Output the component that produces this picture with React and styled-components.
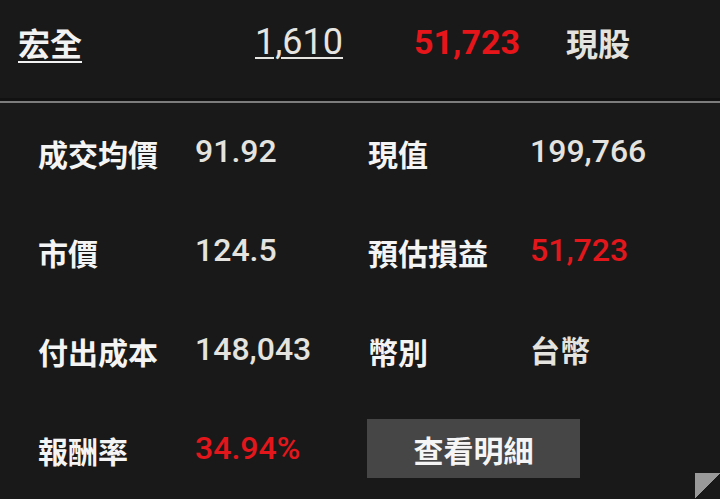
import React from "react";
import styled, { createGlobalStyle } from "styled-components";

const Global = createGlobalStyle`
  html, body { margin: 0; padding: 0; background: #191919; }
  body { width: 720px; height: 499px; overflow: hidden; }
`;

const CJK = `"Noto Sans CJK TC", "Noto Sans CJK SC", sans-serif`;
const NUM = `Roboto, "Noto Sans CJK TC", sans-serif`;

const Page = styled.div`
  position: relative;
  width: 720px;
  height: 499px;
  background: #191919;
  overflow: hidden;
`;

const Header = styled.div`
  display: flex;
  align-items: center;
  height: 84px;
  padding-bottom: 14px;
  border-bottom: 3px solid #111;
`;

const Divider = styled.div`
  height: 2px;
  background: #7c7c7c;
`;

const HCell = styled.div`
  width: ${(p) => p.$w}px;
  flex: none;
  padding-left: ${(p) => p.$pl || 0}px;
  box-sizing: border-box;
  font-family: ${(p) => (p.$num ? NUM : CJK)};
  font-size: ${(p) => p.$size || 32}px;
  font-weight: ${(p) => (p.$bold ? 700 : 400)};
  color: ${(p) => p.$color || "#f2f2f2"};
  line-height: 1;
  white-space: nowrap;
`;

const Linked = styled.span`
  text-decoration: underline;
  text-decoration-thickness: 2px;
  text-underline-offset: ${(p) => p.$off || 4}px;
`;

const Grid = styled.div`
  display: grid;
  grid-template-columns: 157px 173px 162px 1fr;
  grid-auto-rows: 99px;
  padding-left: 38px;
`;

const Label = styled.div`
  display: flex;
  align-items: center;
  font-family: ${CJK};
  font-size: 30px;
  font-weight: 700;
  color: #f4f4f4;
  white-space: nowrap;
`;

const Value = styled.div`
  display: flex;
  align-items: center;
  font-family: ${(p) => (p.$cjk ? CJK : NUM)};
  font-size: ${(p) => (p.$cjk ? 30 : 32)}px;
  font-weight: ${(p) => (p.$cjk ? 700 : 500)};
  color: ${(p) => (p.$red ? "#e3161b" : "#e4e3df")};
  white-space: nowrap;
  margin-top: -3px;
`;

const ButtonCell = styled.div`
  grid-column: span 2;
  display: flex;
  align-items: center;
  margin-left: -1px;
`;

const DetailButton = styled.button`
  width: 213px;
  height: 59px;
  border: none;
  background: #464646;
  color: #f5f5f5;
  font-family: ${CJK};
  font-size: 30px;
  font-weight: 700;
  padding: 0;
  margin-top: -2px;
  cursor: pointer;
`;

const Corner = styled.div`
  position: absolute;
  right: 0;
  bottom: 0;
  width: 25px;
  height: 26px;
  background: linear-gradient(to bottom right, #9a9a9a 0 50%, transparent 50% 100%);
`;

export default function App() {
  return (
    <Page>
      <Global />
      <Header>
        <HCell $w={237} $pl={18} $bold>
          <Linked $off={5}>宏全</Linked>
        </HCell>
        <HCell $w={154} $num $size={36} $color="#e6e5e1" $pl={18}>
          <Linked $off={3}>1,610</Linked>
        </HCell>
        <HCell $w={175} $num $size={34} $bold $color="#e5151a" $pl={23}>
          51,723
        </HCell>
        <HCell $w={120} $bold $color="#e4e3df">現股</HCell>
      </Header>
      <Divider />
      <Grid>
        <Label>成交均價</Label>
        <Value>91.92</Value>
        <Label>現值</Label>
        <Value>199,766</Value>

        <Label>市價</Label>
        <Value>124.5</Value>
        <Label>預估損益</Label>
        <Value $red>51,723</Value>

        <Label>付出成本</Label>
        <Value>148,043</Value>
        <Label>幣別</Label>
        <Value $cjk>台幣</Value>

        <Label>報酬率</Label>
        <Value $red>34.94%</Value>
        <ButtonCell>
          <DetailButton>查看明細</DetailButton>
        </ButtonCell>
      </Grid>
      <Corner />
    </Page>
  );
}
